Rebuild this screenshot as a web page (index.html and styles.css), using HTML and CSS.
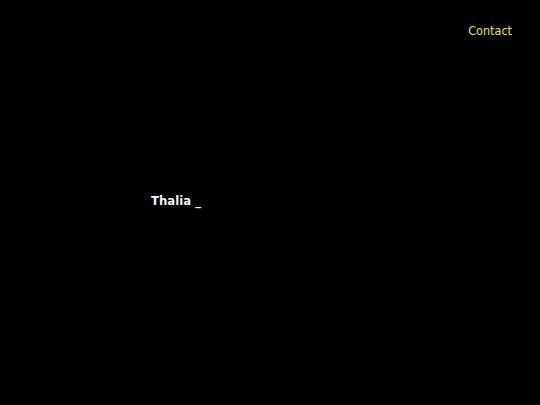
FILE: index.html
```html
<!DOCTYPE html>
<html>
<head>
<meta charset="utf-8">
<link rel="stylesheet" href="styles.css">
</head>
<body>
<div class="page">
  <header class="top">
    <a class="contact" href="#">Contact</a>
  </header>
  <main class="hero">
    <h1 class="name">Thalia _</h1>
  </main>
</div>
</body>
</html>
```
FILE: styles.css
```css
html, body {
  margin: 0;
  padding: 0;
  background: #000;
}
.page {
  width: 540px;
  height: 405px;
  display: flex;
  flex-direction: column;
  font-family: "DejaVu Sans Condensed", "DejaVu Sans", sans-serif;
  font-stretch: condensed;
}
.top {
  display: flex;
  justify-content: flex-end;
  padding: 23px 28px 0 0;
  height: 20px;
}
.contact {
  color: #e8e428;
  font-size: 12.5px;
  line-height: 16px;
  text-decoration: none;
}
.hero {
  padding: 150px 0 0 151px;
}
.name {
  margin: 0;
  color: #f2f2f2;
  font-size: 13px;
  line-height: 16px;
  font-weight: bold;
}
```
